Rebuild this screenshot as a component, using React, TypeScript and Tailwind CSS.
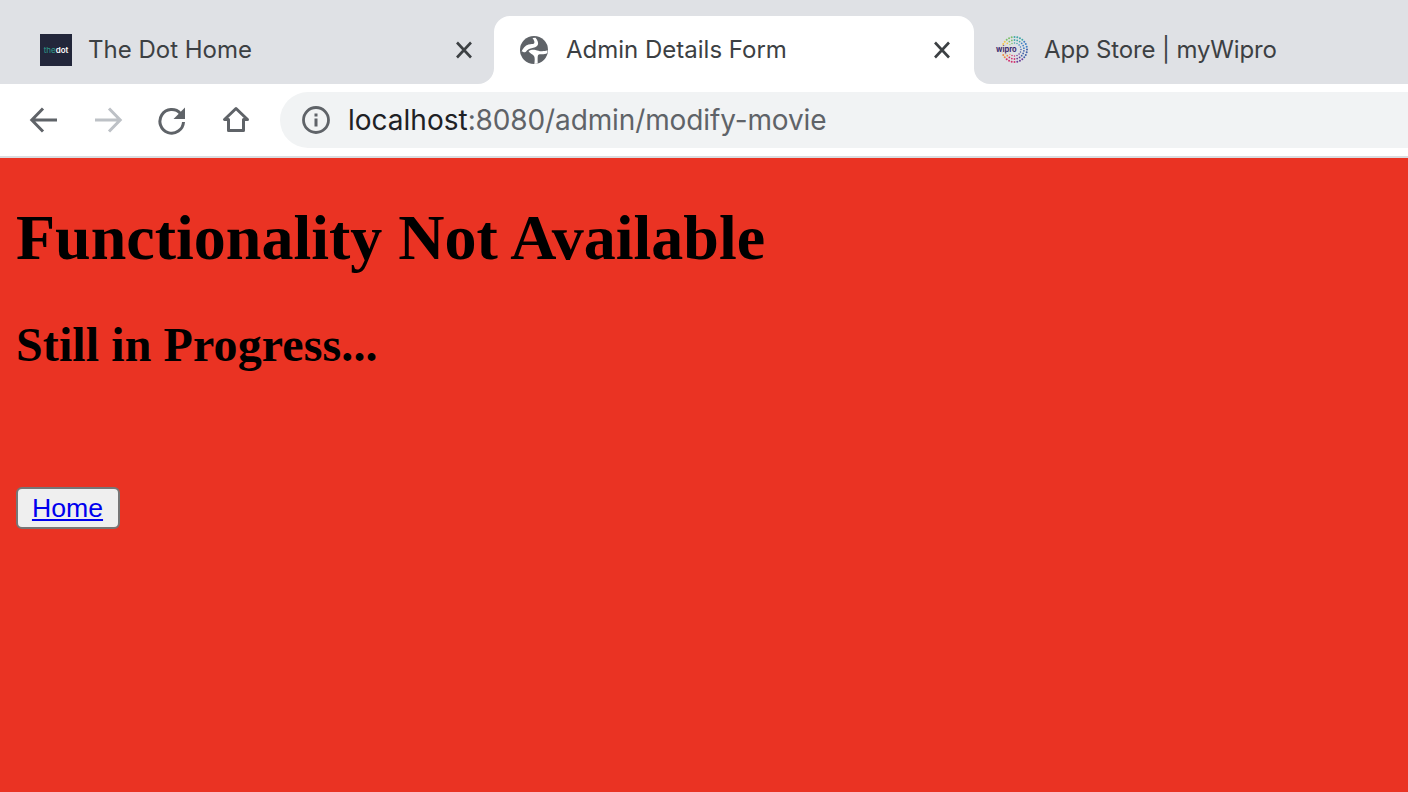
import React from 'react';

const uiFont = "font-['Inter','Liberation_Sans',sans-serif]";

const CloseIcon = () => (
  <svg width="24" height="24" viewBox="0 0 24 24" fill="none" stroke="#3c4043" strokeWidth="2.6" className="shrink-0">
    <path d="M5 4.500 19 19.500M19 4.500 5 19.500" />
  </svg>
);

const GlobeIcon = () => (
  <svg width="28" height="28" viewBox="0 0 28 28" className="shrink-0">
    <circle cx="14" cy="14" r="14" fill="#5f6368" />
    <path d="M1.500 15.500C3 12.500 5 9.500 8.500 8.500c2.500-.7 4.500-.2 5.500-1 1-.9.300-3-1.500-5.500l3-.3c2 2.300 3.300 5 2.300 7.300-1 2.200-3.800 2.800-6.300 3.200-2.500.4-4.500 1.500-5.500 3.500-1.500.8-3 .8-3.500-.2Z" fill="#ffffff" />
    <path d="M8.500 15c2.500-1.500 5-1.500 7-1 2.500.5 4 1.500 6.500 1.300 2-.2 3.500-.3 5.500-1l-.2 2.700c-2 1.300-4.500 1.500-7 1.300-1 .1-1.800.3-2.300 1-.6 1.800-.3 4.700-.3 8.200l-3.300.4c.4-3.500.6-6-.4-7.800-1.200-2-4.500-2.700-5.500-5.100Z" fill="#ffffff" />
  </svg>
);

const DotLogo = () => (
  <div className="flex h-8 w-8 shrink-0 items-center justify-center bg-[#22263a]">
    <span className="text-[8px] font-semibold leading-none text-white">
      <span className="font-normal text-[#2f9c8c]">the</span>dot
    </span>
  </div>
);

const ringColors = ['#3fa6a8', '#3f7fc4', '#3f5fa8', '#6a3f98', '#d1326f', '#ef8a3c', '#f2c84b', '#7cc06a'];

const WiproLogo = () => {
  const dots: React.ReactNode[] = [];
  [12.500, 9.500, 6.500].forEach((r, ring) => {
    const count = 28 - ring * 6;
    for (let i = 0; i < count; i++) {
      const a = (i / count) * Math.PI * 2 - Math.PI / 2;
      const x = 18.500 + r * Math.cos(a);
      const y = 15.500 + r * Math.sin(a);
      const color = ringColors[Math.floor((i / count) * ringColors.length)];
      dots.push(<circle key={`${ring}-${i}`} cx={x} cy={y} r={1 - ring * 0.12} fill={color} />);
    }
  });
  return (
    <div className="relative h-8 w-8 shrink-0">
      <svg width="32" height="32" viewBox="0 0 32 32">
        {dots}
      </svg>
      <span className="absolute left-0 top-[11px] bg-[#dfe1e5]/80 text-[7.500px] font-bold leading-[9px] text-[#3d2a6e]">wipro</span>
    </div>
  );
};

const IconButton = ({ children }: { children: React.ReactNode }) => (
  <div className="flex h-8 w-8 items-center justify-center">{children}</div>
);

export default function App() {
  return (
    <div className="flex min-h-[792px] flex-col bg-[#ea3323]">
      <div className={`bg-[#dfe1e5] pt-4 ${uiFont}`}>
        <div className="flex h-[68px] bg-white text-[24px] text-[#3c4043]">
          <div className="flex w-[494px] items-center rounded-br-2xl bg-[#dfe1e5] pl-10 pr-[18px]">
            <DotLogo />
            <span className="ml-4 flex-1">The Dot Home</span>
            <CloseIcon />
          </div>
          <div className="w-[480px] bg-[#dfe1e5]">
            <div className="flex h-full items-center rounded-t-2xl bg-white pl-[26px] pr-5">
              <GlobeIcon />
              <span className="ml-[18px] flex-1">Admin Details Form</span>
              <CloseIcon />
            </div>
          </div>
          <div className="flex flex-1 items-center rounded-bl-2xl bg-[#dfe1e5] pl-[22px]">
            <WiproLogo />
            <span className="ml-[16px] tracking-[-0.15px]">App Store | myWipro</span>
          </div>
        </div>
      </div>

      <div className={`flex h-[74px] items-center border-b-2 border-[#dadce0] bg-white pl-7 ${uiFont}`}>
        <div className="flex gap-8">
          <IconButton>
            <svg width="32" height="32" viewBox="0 0 32 32" fill="none" stroke="#5f6368" strokeWidth="3">
              <path d="M29 16H5M15 4.500 3.800 16 15 27.500" />
            </svg>
          </IconButton>
          <IconButton>
            <svg width="32" height="32" viewBox="0 0 32 32" fill="none" stroke="#bdc1c6" strokeWidth="3">
              <path d="M3 16h24M17 4.500 28.200 16 17 27.500" />
            </svg>
          </IconButton>
          <IconButton>
            <svg width="32" height="32" viewBox="0 0 32 32" fill="none">
              <path d="M24.500 9.500A11.800 11.800 0 1 0 27.500 18" stroke="#5f6368" strokeWidth="3" />
              <path d="M29 3.500V15H17.500Z" fill="#5f6368" />
            </svg>
          </IconButton>
          <IconButton>
            <svg width="32" height="32" viewBox="0 0 32 32" fill="none" stroke="#5f6368" strokeWidth="3" strokeLinejoin="round">
              <path d="M16 4.500 4.500 15.500H8.500V26.500H23.500V15.500H27.500Z" />
            </svg>
          </IconButton>
        </div>
        <div className="ml-[28px] flex h-14 flex-1 items-center rounded-l-[28px] bg-[#f1f3f4] pl-[22px] text-[28px]">
          <svg width="28" height="28" viewBox="0 0 28 28" fill="none" className="shrink-0">
            <circle cx="14" cy="14" r="12.500" stroke="#5f6368" strokeWidth="2.800" />
            <rect x="12.500" y="12.500" width="3" height="8" fill="#5f6368" />
            <rect x="12.500" y="7.500" width="3" height="3" fill="#5f6368" />
          </svg>
          <span className="ml-[18px] text-[#202124]">localhost</span>
          <span className="tracking-[-0.12px] text-[#5f6368]">:8080/admin/modify-movie</span>
        </div>
      </div>

      <main className="flex-1 p-4 font-['Liberation_Serif',serif] text-black">
        <h1 className="mb-[42px] mt-[27px] text-[64px] font-bold leading-[74px]">Functionality Not Available</h1>
        <h2 className="text-[48px] font-bold leading-[55px] tracking-[0.1px]">Still in Progress...</h2>
        <button
          type="button"
          className="mt-[115px] flex h-[42px] w-[104px] items-center justify-center rounded-md border-2 border-[#767676] bg-[#efefef] pr-[1px] font-['Liberation_Sans',sans-serif] text-[26.670px]"
        >
          <a href="#home" className="text-[#0000ee] underline">
            Home
          </a>
        </button>
      </main>
    </div>
  );
}
